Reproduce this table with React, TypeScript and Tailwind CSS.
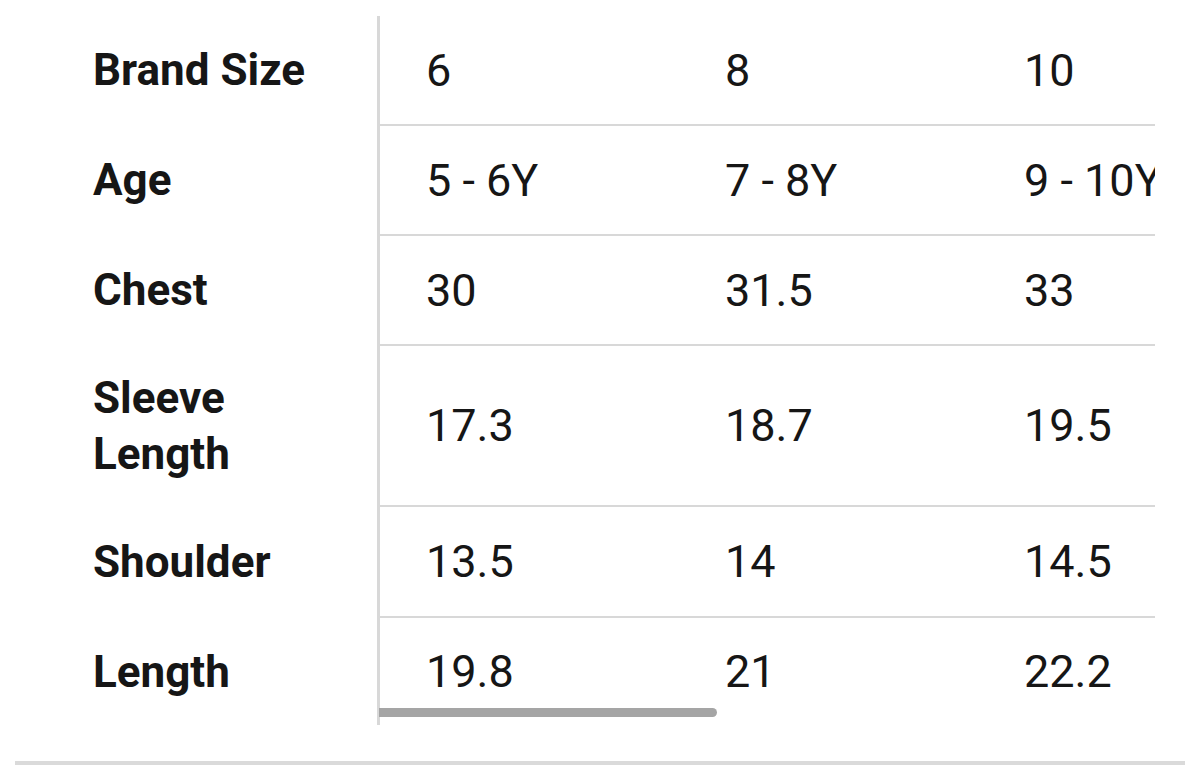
const rows: { label: string[]; values: string[]; h: string }[] = [
  { label: ["Brand Size"], values: ["6", "8", "10"], h: "h-[110px]" },
  { label: ["Age"], values: ["5 - 6Y", "7 - 8Y", "9 - 10Y"], h: "h-[110px]" },
  { label: ["Chest"], values: ["30", "31.5", "33"], h: "h-[110px]" },
  { label: ["Sleeve", "Length"], values: ["17.3", "18.7", "19.5"], h: "h-[161px]" },
  { label: ["Shoulder"], values: ["13.5", "14", "14.5"], h: "h-[111px]" },
  { label: ["Length"], values: ["19.8", "21", "22.2"], h: "h-[107px]" },
];

const App = () => {
  return (
    <div className="w-[1200px] h-[766px] bg-white overflow-hidden font-['Roboto',sans-serif] text-[#161616]">
      <div className="relative pt-4">
        {rows.map((row, i) => {
          const last = i === rows.length - 1;
          return (
            <div key={i} className={`flex ${row.h}`}>
              <div className={`w-[377px] shrink-0 pl-[93px] flex flex-col justify-center ${last ? "" : "pb-[2px]"}`}>
                {row.label.map((l) => (
                  <span key={l} className="text-[44px] font-bold leading-[56px]">
                    {l}
                  </span>
                ))}
              </div>
              <div
                className={`w-[778px] shrink-0 overflow-hidden border-l-[3px] border-[#d8d8d8] ${
                  last ? "" : "border-b-2"
                }`}
              >
                <div className="flex w-[897px] h-full">
                  {row.values.map((v, j) => (
                    <div key={j} className="w-[299px] shrink-0 pl-[46px] flex items-center">
                      <span className="text-[45px] leading-none whitespace-nowrap">{v}</span>
                    </div>
                  ))}
                </div>
              </div>
            </div>
          );
        })}
        <div className="absolute left-[379px] top-[708px] w-[338px] h-[9px] bg-[#a5a5a5] rounded-r-full" />
      </div>
      <div className="mt-[36px] ml-[15px] w-[1170px] h-[4px] bg-[#dadada]" />
    </div>
  );
};

export default App;
